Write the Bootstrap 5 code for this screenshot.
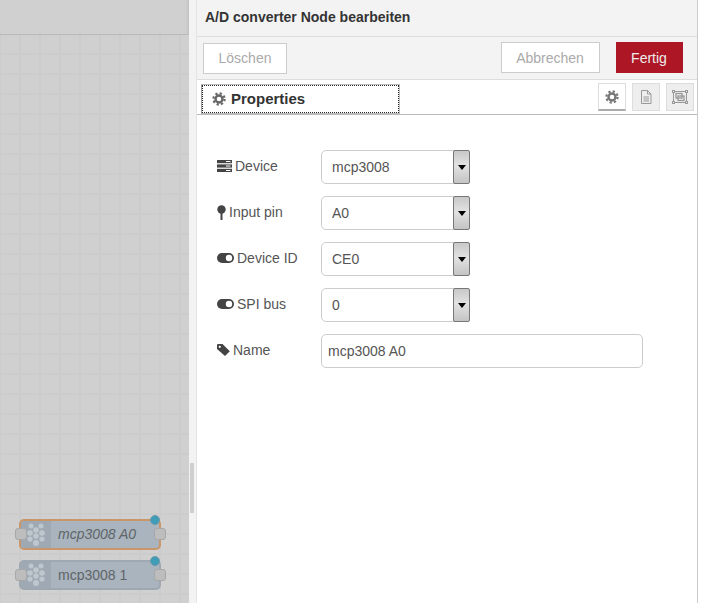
<!DOCTYPE html>
<html lang="de">
<head>
<meta charset="utf-8">
<title>A/D converter Node bearbeiten</title>
<link href="https://cdn.jsdelivr.net/npm/bootstrap@5.3.0/dist/css/bootstrap.min.css" rel="stylesheet">
<style>
html,body{width:701px;height:603px;overflow:hidden;margin:0;background:#fff;font-family:"Liberation Sans",Arial,sans-serif;font-size:14px;color:#555}
.shell{width:701px;height:603px}
.canvas-area{width:189px;background:#d0d0d0;position:relative;flex:none;box-shadow:inset -3px 0 3px -2px #bdbdbd}
.canvas-top{height:35px;border-bottom:1px solid #b9b9b9}
.canvas-grid{height:568px;background-color:#d0d0d0;background-image:linear-gradient(#cccccc 2px,transparent 2px),linear-gradient(90deg,#cccccc 2px,transparent 2px);background-size:20px 20px;background-position:-1px 18px}
.wf-node{position:absolute;left:19px;width:142px;height:30px;background:#a9b4be;border:2px solid #9ea8b2;border-radius:5px;font-size:14px;color:#606468;display:flex;align-items:center}
.wf-node.picked{border-color:#c89668;top:519px;height:31px;font-style:italic}
.wf-node.plain{top:560px}
.node-icon{width:30px;height:100%;background:#9fa9b3;border-radius:3px 0 0 3px;flex:none;display:flex;align-items:center;justify-content:center;margin-right:7px}
.node-port{position:absolute;width:12px;height:12px;background:#bdbdbd;border:1px solid #a8a8a8;border-radius:3px;top:7px}
.port-l{left:-6px}.port-r{right:-7px}
.node-dot{position:absolute;width:10px;height:10px;background:#3f9db8;border:1px solid #6f98a8;border-radius:50%;top:-6px;right:-1px}
.side-strip{width:8px;background:#f3f3f3;flex:none;position:relative;border-right:1px solid #e3e3e3}
.drag-handle{position:absolute;left:1px;top:463px;width:4px;height:50px;background:#cfcfcf}
.edit-panel{width:501px;flex:none;border-right:1px solid #ccc;background:#fff}
.edge-gap{flex:1;background:#fff}
.panel-head{height:37px;background:#f3f3f3;border-bottom:1px solid #ddd;padding:8px 0 0 8px;font-weight:700;color:#333;font-size:14px;line-height:18px}
.panel-btns{height:43px;background:#f3f3f3;border-bottom:1px solid #ddd;padding:5px 14px 0 6px}
.ghost-btn,.done-btn{height:31px;font-size:14px;line-height:30px;padding:0;border-radius:0;font-family:inherit}
.ghost-btn{background:#fff;border:1px solid #ccc;color:#aaa}
.ghost-btn:hover{background:#fff;border-color:#ccc;color:#aaa}
.del-btn{width:84px;margin-top:1px;line-height:29px}
.cancel-btn{width:99px;padding-right:1px}
.done-btn{width:67px;background:#ad1625;border:1px solid #ad1625;color:#eee;margin-left:16px;padding-right:1px}
.tab-row{height:35px;border-bottom:1px solid #bbb;padding:4px 3px 0 4px}
.prop-tab{width:199px;height:30px;background:#fff;border:1px solid #bbb;border-left-color:#999;outline:1px dotted #222;outline-offset:-2px;font-weight:700;color:#333;font-size:15px;padding-left:10px;margin-bottom:-1px;display:flex;align-items:center;gap:5px}
.tab-tools{gap:6px;margin-top:-1px}
.tool-btn{width:28px;height:28px;background:#eee;border:1px solid #ddd;display:flex;align-items:center;justify-content:center}
.tool-btn.on{background:#fff;border-bottom:2px solid #aaa}
.form-zone{padding:35px 0 0 20px}
.field-row{height:34px;margin-bottom:12px;display:flex;align-items:flex-start}
.field-label{width:104px;flex:none;color:#555;font-size:14px;line-height:20px;display:flex;align-items:center;gap:3px;padding-top:6px}
.pick-wrap{position:relative;width:149px;height:34px}
.pick-box{width:100%;height:34px;border:1px solid #ccc;border-radius:5px;padding:0 0 0 10px;font-size:14px;color:#555;background:#fff;appearance:none;-webkit-appearance:none;font-family:inherit}
.pick-arrow{position:absolute;right:0;top:0;width:17px;height:34px;border:1px solid #777;border-radius:2px;background:linear-gradient(#c8c8c8,#e2e2e2 45%,#c4c4c4);display:flex;align-items:center;justify-content:center}
.pick-arrow::after{content:"";border-left:4.500px solid transparent;border-right:4.500px solid transparent;border-top:5px solid #000}
.name-box{width:322px;height:34px;border:1px solid #ccc;border-radius:5px;padding:0 6px;font-size:14px;color:#555;font-family:inherit;background:#fff}
</style>
</head>
<body>
<div class="shell d-flex">
  <div class="canvas-area">
    <div class="canvas-top"></div>
    <div class="canvas-grid"></div>
    <div class="wf-node picked">
      <span class="node-icon"><svg width="20" height="24" viewBox="0 0 20 24"><g fill="#bfc7ce"><circle cx="5" cy="3" r="2.500"/><circle cx="15" cy="3" r="2.500"/><circle cx="10" cy="7" r="2.800"/><circle cx="4" cy="10" r="2.800"/><circle cx="16" cy="10" r="2.800"/><circle cx="10" cy="13" r="2.800"/><circle cx="4" cy="16" r="2.600"/><circle cx="16" cy="16" r="2.600"/><circle cx="10" cy="20" r="3"/></g></svg></span>
      <span>mcp3008 A0</span>
      <span class="node-port port-l"></span><span class="node-port port-r"></span><span class="node-dot"></span>
    </div>
    <div class="wf-node plain">
      <span class="node-icon"><svg width="20" height="24" viewBox="0 0 20 24"><g fill="#bfc7ce"><circle cx="5" cy="3" r="2.500"/><circle cx="15" cy="3" r="2.500"/><circle cx="10" cy="7" r="2.800"/><circle cx="4" cy="10" r="2.800"/><circle cx="16" cy="10" r="2.800"/><circle cx="10" cy="13" r="2.800"/><circle cx="4" cy="16" r="2.600"/><circle cx="16" cy="16" r="2.600"/><circle cx="10" cy="20" r="3"/></g></svg></span>
      <span>mcp3008 1</span>
      <span class="node-port port-l"></span><span class="node-port port-r"></span><span class="node-dot"></span>
    </div>
  </div>
  <div class="side-strip"><div class="drag-handle"></div></div>
  <div class="edit-panel d-flex flex-column">
    <div class="panel-head">A/D converter Node bearbeiten</div>
    <div class="panel-btns d-flex align-items-start justify-content-between">
      <button type="button" class="btn ghost-btn del-btn">Löschen</button>
      <div class="d-flex">
        <button type="button" class="btn ghost-btn cancel-btn">Abbrechen</button>
        <button type="button" class="btn done-btn">Fertig</button>
      </div>
    </div>
    <div class="tab-row d-flex justify-content-between align-items-start">
      <div class="prop-tab">
        <svg width="14" height="14" viewBox="0 0 14 14"><circle cx="7" cy="7" r="5.600" fill="none" stroke="#666" stroke-width="2.200" stroke-dasharray="2.200 2.200"/><circle cx="7" cy="7" r="3.500" fill="none" stroke="#666" stroke-width="2.400"/></svg>
        <span>Properties</span>
      </div>
      <div class="tab-tools d-flex">
        <span class="tool-btn on"><svg width="14" height="14" viewBox="0 0 14 14"><circle cx="7" cy="7" r="5.600" fill="none" stroke="#777" stroke-width="2.200" stroke-dasharray="2.200 2.200"/><circle cx="7" cy="7" r="3.500" fill="none" stroke="#777" stroke-width="2.400"/></svg></span>
        <span class="tool-btn"><svg width="12" height="14" viewBox="0 0 12 14" fill="none" stroke="#999"><path d="M1.500 .5H7.500L11 4V13.500H1.500ZM7.500 .5V4H11M3.500 7H9M3.500 9H9M3.500 11H9"/></svg></span>
        <span class="tool-btn"><svg width="16" height="14" viewBox="0 0 16 14" fill="none" stroke="#999"><path d="M2.500 1.500H13.500M2.500 12.500H13.500M1.500 2.500V11.500M14.500 2.500V11.500"/><rect x=".5" y=".5" width="2" height="2"/><rect x="13.500" y=".5" width="2" height="2"/><rect x=".5" y="11.500" width="2" height="2"/><rect x="13.500" y="11.500" width="2" height="2"/><rect x="4" y="3.500" width="6" height="4.500" stroke-width="1.300"/><rect x="6" y="6" width="6" height="4.500" stroke-width="1.300"/></svg></span>
      </div>
    </div>
    <div class="form-zone">
      <div class="field-row">
        <label class="field-label"><svg width="15" height="12" viewBox="0 0 15 12"><g fill="#444"><rect y="0" width="15" height="3.200"/><rect y="4.400" width="15" height="3.200"/><rect y="8.800" width="15" height="3.200"/></g><g fill="#fff"><rect x="9" y="1" width="4.500" height="1"/><rect x="9" y="5.500" width="4.500" height="1"/><rect x="9" y="10" width="4.500" height="1"/></g></svg>Device</label>
        <div class="pick-wrap"><select class="pick-box"><option>mcp3008</option></select><span class="pick-arrow"></span></div>
      </div>
      <div class="field-row">
        <label class="field-label"><svg width="9" height="15" viewBox="0 0 9 15"><circle cx="4.500" cy="4.500" r="4.200" fill="#444"/><rect x="3.500" y="7" width="2" height="8" fill="#444"/></svg>Input pin</label>
        <div class="pick-wrap"><select class="pick-box"><option>A0</option></select><span class="pick-arrow"></span></div>
      </div>
      <div class="field-row">
        <label class="field-label"><svg width="17" height="10" viewBox="0 0 17 10"><rect width="17" height="10" rx="5" fill="#444"/><circle cx="12" cy="5" r="3.200" fill="#fff"/></svg>Device ID</label>
        <div class="pick-wrap"><select class="pick-box"><option>CE0</option></select><span class="pick-arrow"></span></div>
      </div>
      <div class="field-row">
        <label class="field-label"><svg width="17" height="10" viewBox="0 0 17 10"><rect width="17" height="10" rx="5" fill="#444"/><circle cx="12" cy="5" r="3.200" fill="#fff"/></svg>SPI bus</label>
        <div class="pick-wrap"><select class="pick-box"><option>0</option></select><span class="pick-arrow"></span></div>
      </div>
      <div class="field-row">
        <label class="field-label"><svg width="13" height="12" viewBox="0 0 13 12"><path d="M0 1Q0 0 1 0H5.500L12.800 7.200L8 12L0 5ZM2.800 1.700A1.100 1.100 0 1 0 2.800 3.900A1.100 1.100 0 1 0 2.800 1.700Z" fill="#444" fill-rule="evenodd"/></svg>Name</label>
        <input type="text" class="name-box" value="mcp3008 A0">
      </div>
    </div>
  </div>
  <div class="edge-gap"></div>
</div>
<script src="https://cdn.jsdelivr.net/npm/bootstrap@5.3.0/dist/js/bootstrap.bundle.min.js"></script>
</body>
</html>
